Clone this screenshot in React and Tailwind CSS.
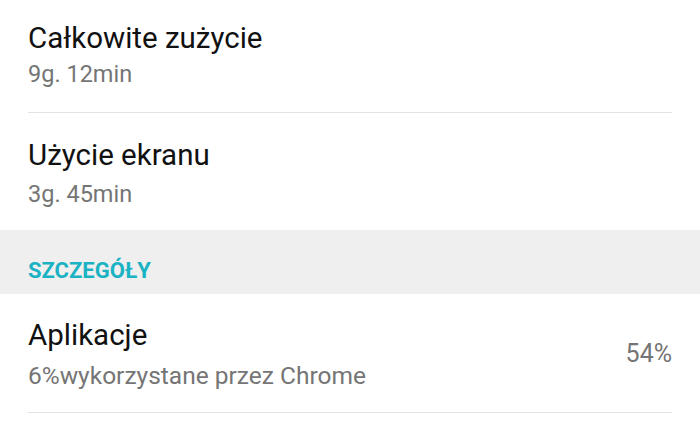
const Row = ({ title, subtitle, className = '', gap = 'mt-[4px]' }) => (
  <div className={`px-[28px] ${className}`}>
    <div className="text-[29.5px] leading-[36px] text-[#111111]">{title}</div>
    <div className={`text-[23.5px] leading-[28px] text-[#757575] ${gap}`}>{subtitle}</div>
  </div>
);

export default function App() {
  return (
    <div className="w-[700px] h-[441px] bg-white overflow-hidden" style={{ fontFamily: 'Roboto, "Noto Sans", sans-serif' }}>
      <Row title="Całkowite zużycie" subtitle="9g. 12min" className="pt-[20px] pb-[24px]" gap="mt-[4px]" />
      <div className="mx-[28px] h-px bg-[#e3e3e3]" />
      <Row title="Użycie ekranu" subtitle="3g. 45min" className="pt-[24px] pb-[22px]" gap="mt-[7px]" />
      <div className="h-[64px] bg-[#efefef] px-[28px] pt-[27px]">
        <div className="text-[22px] leading-[28px] font-bold text-[#1bb3c3]">SZCZEGÓŁY</div>
      </div>
      <div className="mx-[28px] flex items-center justify-between pt-[23px] pb-[22px]">
        <div>
          <div className="text-[29.5px] leading-[36px] text-[#111111]">Aplikacje</div>
          <div className="text-[24.5px] leading-[28px] text-[#757575] mt-[9px]">6%wykorzystane przez Chrome</div>
        </div>
        <div className="text-[25px] leading-[28px] text-[#757575]">54%</div>
      </div>
      <div className="mx-[28px] h-px bg-[#e3e3e3]" />
    </div>
  );
}
